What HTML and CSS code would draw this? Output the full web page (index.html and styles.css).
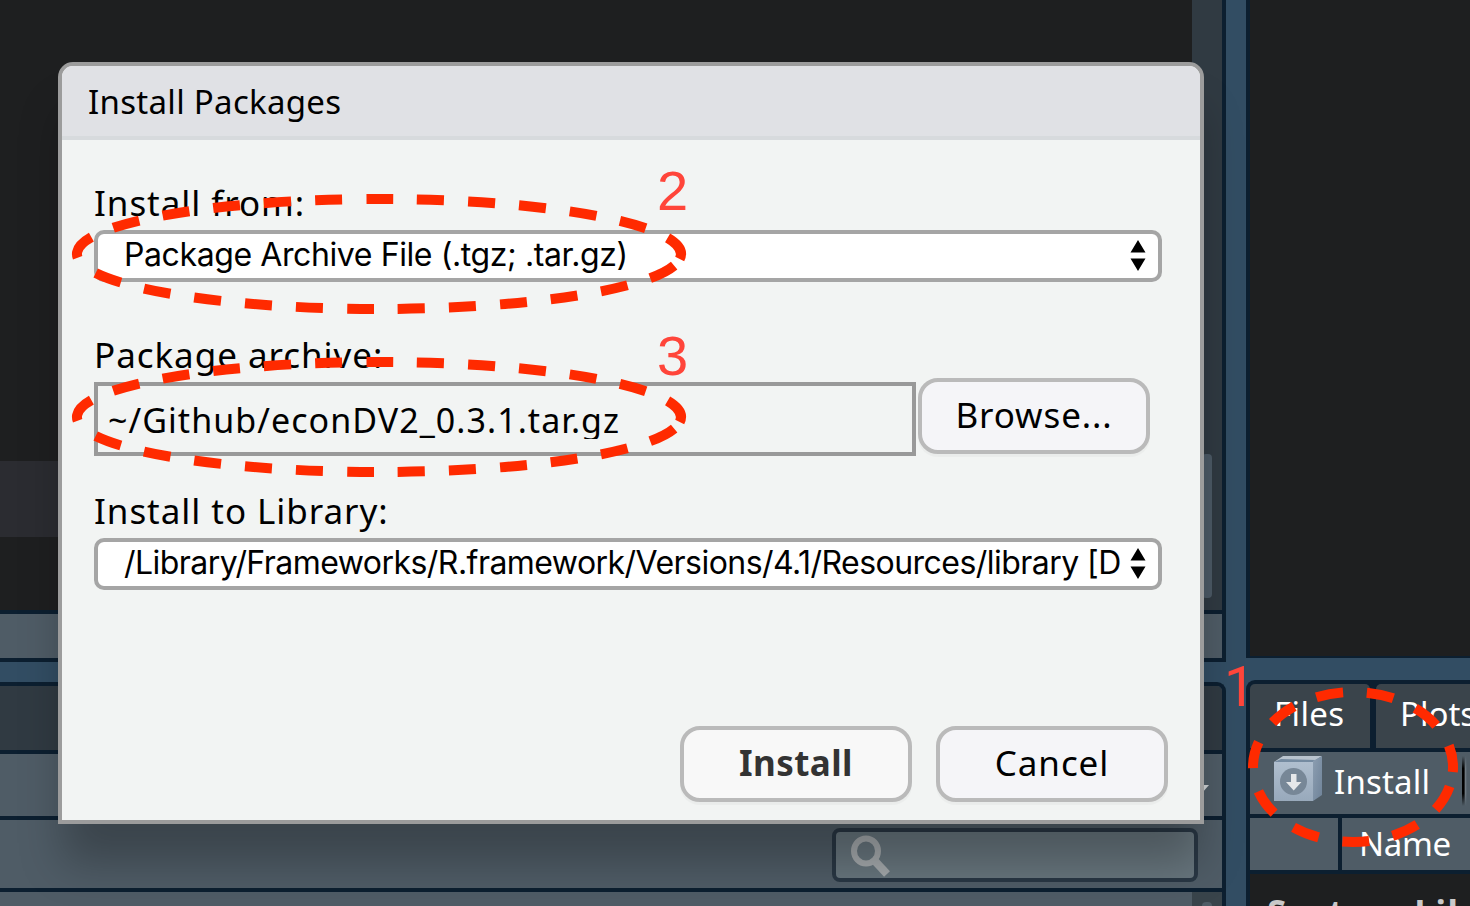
FILE: index.html
```html
<!DOCTYPE html>
<html lang="en">
<head>
<meta charset="utf-8">
<title>Install Packages</title>
<link rel="stylesheet" href="styles.css">
</head>
<body>
<div class="workspace">
  <div class="column">
    <section class="pane source">
      <div class="editor">
        <div class="code"><div class="current-line"></div></div>
        <div class="scrollbar"><div class="thumb"></div></div>
      </div>
      <div class="status"></div>
    </section>
    <section class="pane console">
      <div class="console-tabs"></div>
      <div class="console-tools"><svg class="caret" width="14" height="8" viewBox="0 0 14 8"><path d="M0 0H14L7 8Z" fill="#cfd3d5"/></svg></div>
      <div class="console-search">
        <div class="search">
          <svg width="42" height="42" viewBox="0 0 42 42" fill="none" stroke="#a4a9ac"><ellipse cx="15" cy="16" rx="12" ry="12.500" stroke-width="6"/><path d="M23 25L36 39" stroke-width="8"/></svg>
        </div>
      </div>
      <div class="console-body"><div class="scrollbar"><div class="thumb small"></div></div></div>
    </section>
  </div>
  <div class="column">
    <section class="pane environment"></section>
    <section class="pane packages">
      <div class="tabs"><div class="tab files"><span>Files</span></div><div class="tab plots"><span>Plots</span></div></div>
      <div class="toolbar">
        <svg class="box" width="50" height="46" viewBox="0 0 50 46">
          <defs>
            <linearGradient id="front" x1="0" y1="0" x2="0" y2="1"><stop offset="0" stop-color="#b0bfcf"/><stop offset="1" stop-color="#98a9bb"/></linearGradient>
            <linearGradient id="side" x1="0" y1="0" x2="1" y2="1"><stop offset="0" stop-color="#8c9eb1"/><stop offset="1" stop-color="#6f8399"/></linearGradient>
          </defs>
          <path d="M1 6L10 0H49L40 6Z" fill="#b9c4ce"/><path d="M1 6L8 3L43 4L40 6Z" fill="#758ba1"/>
          <path d="M40 5L49 0V39L40 45Z" fill="url(#side)"/>
          <path d="M1 6H40V45H1Z" fill="url(#front)"/>
          <circle cx="20.500" cy="25.500" r="13.500" fill="#778797"/>
          <path d="M18 18H23.500V26H28.500L20.700 34.500L13 26H18Z" fill="#e6e8ea"/>
        </svg>
        <span class="install-label">Install</span>
        <div class="divider"></div>
      </div>
      <div class="table-head"><div class="check"></div><div class="name"><span>Name</span></div></div>
      <div class="list"><span>System Library</span></div>
    </section>
  </div>
</div>

<div class="dialog">
  <div class="dialog-title"><span>Install Packages</span></div>
  <div class="dialog-body">
    <label class="label from">Install from:</label>
    <div class="select"><span class="value source-value">Package Archive File (.tgz; .tar.gz)</span>
      <svg class="arrows" width="16" height="32" viewBox="0 0 16 32"><path d="M.5 12.500L8 0L15.500 12.500ZM.5 18.500H15.500L8 31Z"/></svg></div>
    <label class="label archive">Package archive:</label>
    <div class="file-row">
      <div class="file"><span>~/Github/econDV2_0.3.1.tar.gz</span></div>
      <div class="button browse"><span>Browse...</span></div>
    </div>
    <label class="label library">Install to Library:</label>
    <div class="select"><span class="value library-value">/Library/Frameworks/R.framework/Versions/4.1/Resources/library [D</span>
      <svg class="arrows" width="16" height="32" viewBox="0 0 16 32"><path d="M.5 12.500L8 0L15.500 12.500ZM.5 18.500H15.500L8 31Z"/></svg></div>
    <div class="actions">
      <div class="button primary"><span>Install</span></div>
      <div class="button cancel"><span>Cancel</span></div>
    </div>
  </div>
</div>

<svg class="annotations" width="1470" height="906" viewBox="0 0 1470 906">
  <g fill="none" stroke="#ff2a00" stroke-width="10" stroke-dasharray="27 24">
    <path d="M679.700 259A302 55 0 1 0 378 309A302 55 0 0 0 679.700 259"/>
    <path d="M679.700 422A302 55 0 1 0 378 472A302 55 0 0 0 679.700 422"/>
    <path d="M1452.800 772A100 75 0 1 0 1353 842A100 75 0 0 0 1452.800 772"/>
  </g>
  <g class="numbers"><text class="one" x="1224" y="706">1</text><text x="657" y="210">2</text><text x="657" y="375">3</text></g>
</svg>
</body>
</html>
```
FILE: styles.css
```css
* { box-sizing: border-box; }
body { margin: 0; width: 1470px; height: 906px; overflow: hidden; background: #324d63; font-family: "Noto Sans", sans-serif; }
.workspace { display: grid; grid-template-columns: 1226px 224px; gap: 20px; height: 906px; }
.column { display: flex; flex-direction: column; min-width: 0; overflow: hidden; height: 906px; }
.pane { display: flex; flex-direction: column; overflow: hidden; flex: none; }
.source { height: 662px; border-right: 4px solid #0c1f30; border-bottom: 4px solid #0c1f30; }
.editor { height: 614px; display: flex; border-bottom: 4px solid #0c1f30; }
.code { flex: 1; background: #1e1f20; padding-top: 461px; }
.current-line { height: 76px; background: #2b2c31; }
.scrollbar { width: 30px; background: #303a42; display: flex; justify-content: center; }
.thumb { width: 10px; height: 144px; margin-top: 454px; border-radius: 4px; background: #4c5a66; }
.status { height: 44px; background: #4f5c66; }
.console { height: 224px; margin-top: 20px; border-top: 4px solid #0c1f30; border-right: 4px solid #0c1f30; border-top-right-radius: 9px; }
.console-tabs { height: 68px; background: #303a42; border-bottom: 4px solid #0c1f30; }
.console-tools { height: 66px; background: #4f5c66; border-bottom: 4px solid #0c1f30; display: flex; justify-content: flex-end; align-items: center; padding: 7px 13px 0 0; }
.console-search { height: 72px; background: #4f5c66; border-bottom: 4px solid #0c1f30; display: flex; justify-content: flex-end; padding: 8px 24px 0 0; }
.search { width: 366px; height: 54px; border: 4px solid #293744; border-radius: 8px; background: #67757d; padding: 3px 15px; }
.console-body { height: 14px; background: #4f5c66; display: flex; justify-content: flex-end; }
.console-body .scrollbar { background: #39444b; }
.small { margin-top: 10px; background: #4f5c66; }

.environment { height: 658px; background: #1e1f20; border-left: 4px solid #0c1f30; border-bottom: 2px solid #0c1f30; }
.packages { height: 226px; margin-top: 22px; border-top: 4px solid #0c1f30; border-left: 4px solid #0c1f30; border-top-left-radius: 9px; color: #fff; font-size: 33px; line-height: 40px; white-space: nowrap; }
.tabs { height: 68px; display: flex; gap: 6px; background: #0c1f30; border-bottom: 4px solid #0c1f30; }
.tab { background: #3a444b; padding: 10px 0 0 24px; letter-spacing: .4px; }
.files { width: 120px; flex: none; border-radius: 4px 5px 0 0; }
.plots { flex: 1; border-radius: 5px 0 0 0; letter-spacing: 0; }
.toolbar { height: 66px; background: #4f5c66; border-bottom: 4px solid #0c1f30; display: flex; padding: 4px 0 0 23px; }
.box { flex: none; }
.install-label { padding: 6px 0 0 11px; width: 139px; flex: none; letter-spacing: .2px; }
.divider { width: 5px; height: 50px; background: linear-gradient(#4f5c66, transparent 25% 75%, #4f5c66), linear-gradient(90deg, #000 0 45%, #78838b 60%, #4f5c66); }
.table-head { height: 56px; display: flex; gap: 4px; background: #0c1f30; border-bottom: 4px solid #0c1f30; }
.check { width: 88px; background: #4f5c66; }
.name { flex: 1; background: #4f5c66; padding: 6px 0 0 17px; letter-spacing: -.3px; }
.list { height: 32px; background: #1e1f20; color: #c9c9c9; font-size: 35px; letter-spacing: 1.6px; font-weight: 700; padding: 19px 0 0 17px; }

.dialog { position: absolute; left: 58px; top: 62px; width: 1146px; height: 762px; border: 4px solid #9c9c9c; border-radius: 15px 15px 0 0; background: #f2f4f3; box-shadow: 0 44px 44px -5px rgba(0,0,0,.26); color: #000; white-space: nowrap; }
.dialog-title { height: 74px; padding: 14px 26px; border-bottom: 4px solid #d7dadd; border-radius: 11px 11px 0 0; background: #e0e1e5; font-size: 33px; line-height: 44px; letter-spacing: .3px; }
.dialog-body { padding: 38px 32px 0; display: flex; flex-direction: column; }
.label { font-size: 35px; line-height: 50px; height: 52px; flex: none; letter-spacing: .95px; }
.archive { margin-top: 48px; }
.library { margin-top: 30px; }
.select { height: 52px; width: 1068px; border: 4px solid #a5a5a5; border-radius: 10px; background: #fff; display: flex; justify-content: space-between; padding: 0 12px 0 26px; font-family: Inter, sans-serif; font-size: 32px; line-height: 42px; flex: none; }
.source-value { letter-spacing: -.4px; }
.library-value { letter-spacing: -.54px; }
.arrows { margin-top: 6px; flex: none; }
.file-row { display: flex; gap: 2px; height: 78px; margin-top: -4px; }
.file { width: 822px; height: 74px; margin-top: 4px; border: 4px solid #999; padding: 12px 10px; font-size: 34px; line-height: 44px; letter-spacing: 1.05px; }
.file span { display: block; height: 41px; overflow: hidden; }
.button { width: 232px; height: 76px; border: 4px solid #bababa; border-radius: 20px; background: #f5f5f8; box-shadow: 0 3px 1px rgba(0,0,0,.03); text-align: center; font-size: 35px; line-height: 66px; letter-spacing: .9px; }
.actions { display: flex; justify-content: flex-end; gap: 24px; margin-top: 136px; }
.primary { background: #f8f8f8; color: #333; font-weight: 700; letter-spacing: .4px; }
.annotations { position: absolute; left: 0; top: 0; }
.numbers { font-family: "Liberation Sans", sans-serif; font-size: 56px; fill: #ff453a; }
.one { font-family: Roboto, sans-serif; }
```
